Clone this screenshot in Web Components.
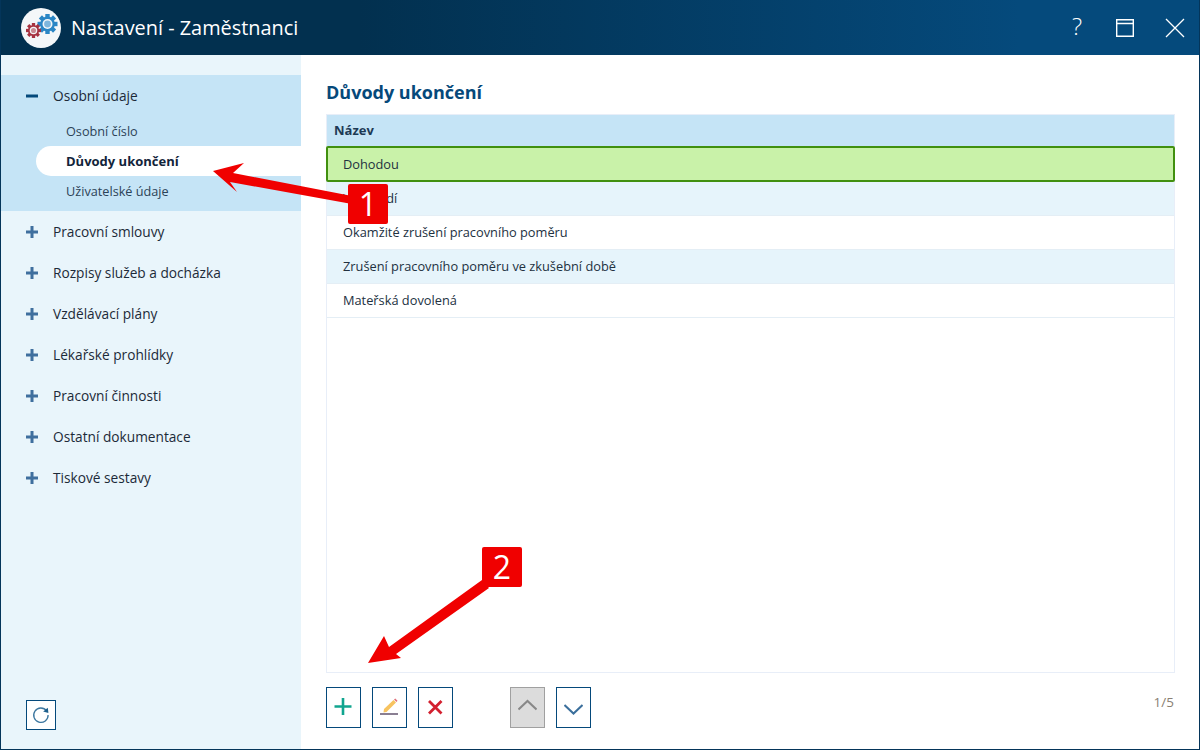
<!DOCTYPE html>
<html lang="cs">
<head>
<meta charset="utf-8">
<title>Nastavení - Zaměstnanci</title>
<style>
    html, body { margin: 0; padding: 0; background: #fff; }
    body { font-family: "Open Sans", "Liberation Sans", sans-serif; }
</style>
</head>
<body>
<app-window>
    <title-bar slot="title" text="Nastavení - Zaměstnanci"></title-bar>
    <side-nav slot="side">
        <nav-group label="Osobní údaje" open>
            <nav-sub>Osobní číslo</nav-sub>
            <nav-sub active>Důvody ukončení</nav-sub>
            <nav-sub>Uživatelské údaje</nav-sub>
        </nav-group>
        <nav-group label="Pracovní smlouvy"></nav-group>
        <nav-group label="Rozpisy služeb a docházka"></nav-group>
        <nav-group label="Vzdělávací plány"></nav-group>
        <nav-group label="Lékařské prohlídky"></nav-group>
        <nav-group label="Pracovní činnosti"></nav-group>
        <nav-group label="Ostatní dokumentace"></nav-group>
        <nav-group label="Tiskové sestavy"></nav-group>
    </side-nav>
    <list-panel slot="main" heading="Důvody ukončení">
        <table-row head>Název</table-row>
        <table-row selected>Dohodou</table-row>
        <table-row alt>Výpovědí</table-row>
        <table-row>Okamžité zrušení pracovního poměru</table-row>
        <table-row alt>Zrušení pracovního poměru ve zkušební době</table-row>
        <table-row>Mateřská dovolená</table-row>
    </list-panel>
    <call-outs slot="over"></call-outs>
</app-window>

<script>
class AppWindow extends HTMLElement {
    constructor() {
        super();
        this.attachShadow({ mode: 'open' });
        this.shadowRoot.innerHTML = `
            <style>
                :host {
                    display: grid;
                    position: relative;
                    width: 1200px;
                    height: 750px;
                    box-sizing: border-box;
                    border: 1px solid #04355a;
                    border-top: 0;
                    grid-template-columns: 300px 1fr;
                    grid-template-rows: 55px 1fr;
                    background: #fff;
                    overflow: hidden;
                }
                .title { grid-column: 1 / 3; margin: 0 -1px; display: block; }
            </style>
            <div class="title"><slot name="title"></slot></div>
            <slot name="side"></slot>
            <slot name="main"></slot>
            <slot name="over"></slot>
        `;
    }
}

class TitleBar extends HTMLElement {
    constructor() {
        super();
        this.attachShadow({ mode: 'open' });
    }
    connectedCallback() {
        const gear = (cx, cy, r, color, inner) => {
            let teeth = '';
            for (let i = 0; i < 8; i++) {
                teeth += `<rect x="${cx - r * 0.22}" y="${cy - r}" width="${r * 0.44}" height="${r * 0.4}" fill="${color}" transform="rotate(${i * 45} ${cx} ${cy})"/>`;
            }
            return `${teeth}<circle cx="${cx}" cy="${cy}" r="${r * 0.74}" fill="${color}"/>
                <circle cx="${cx}" cy="${cy}" r="${r * 0.5}" fill="#f4f7f9"/>
                <circle cx="${cx}" cy="${cy}" r="${r * 0.34}" fill="${inner}"/>`;
        };
        this.shadowRoot.innerHTML = `
            <style>
                :host {
                    display: flex;
                    align-items: center;
                    height: 55px;
                    background: linear-gradient(90deg, #02304f 0%, #02304f 30%, #054a7c 85%, #054a7c 100%);
                    color: #fff;
                }
                .logo { margin-left: 21px; width: 40px; height: 40px; flex: none; }
                .text { margin-left: 10px; font-size: 19.9px; padding-bottom: 1px; }
                .btns { margin-left: auto; display: flex; align-items: center; }
                .q { width: 20px; margin-right: 29px; text-align: center; font-size: 24px; line-height: 1; font-weight: 300; padding-bottom: 3px; }
                svg.b { display: block; }
            </style>
            <svg class="logo" viewBox="0 0 40 40">
                <circle cx="20" cy="20" r="20" fill="#f4f7f9"/>
                ${gear(26.5, 16, 10, '#2a86c5', '#7db6dd')}
                ${gear(12.5, 22.5, 7.5, '#a63240', '#c98a92')}
            </svg>
            <span class="text">${this.getAttribute('text')}</span>
            <div class="btns">
                <span class="q">?</span>
                <svg class="b" width="18" height="18" viewBox="0 0 18 18" fill="none" stroke="#fff" style="margin-right:31px">
                    <path d="M.7 .7h16.600v16.600H.7zM.7 4.500h16.600" stroke-width="1.4"/>
                </svg>
                <svg class="b" width="20" height="20" viewBox="0 0 20 20" fill="none" stroke="#fff" style="margin-right:15px">
                    <path d="M1 1l18 18M19 1L1 19" stroke-width="1.3"/>
                </svg>
            </div>
        `;
    }
}

class SideNav extends HTMLElement {
    constructor() {
        super();
        this.attachShadow({ mode: 'open' });
        this.shadowRoot.innerHTML = `
            <style>
                :host {
                    display: flex;
                    flex-direction: column;
                    background: #e9f5fb;
                    padding-top: 20px;
                    position: relative;
                    min-height: 0;
                }
                .reload {
                    margin: auto 0 19px 25px;
                    width: 30px;
                    height: 30px;
                    box-sizing: border-box;
                    border: 1px solid #04497b;
                    background: #fff;
                    display: flex;
                    align-items: center;
                    justify-content: center;
                }
            </style>
            <slot></slot>
            <div class="reload">
                <svg width="18" height="18" viewBox="0 0 18 18" fill="none">
                    <path d="M14.6 4.8A7.2 7.2 0 1 0 16.1 9" stroke="#3b769f" stroke-width="1.3"/>
                    <path d="M11.2 5.6l5.2 1.3-.6-5.2z" fill="#1d5f8c"/>
                </svg>
            </div>
        `;
    }
}

class NavGroup extends HTMLElement {
    constructor() {
        super();
        this.attachShadow({ mode: 'open' });
    }
    connectedCallback() {
        const open = this.hasAttribute('open');
        this.shadowRoot.innerHTML = `
            <style>
                :host {
                    display: block;
                    font-size: 13.7px;
                    color: #1c2a38;
                    ${open ? 'background: #c5e4f6; padding-bottom: 5px;' : ''}
                }
                .row { display: flex; align-items: center; height: 41px; padding-left: 25px; }
                svg { flex: none; margin-right: 15px; }
            </style>
            <div class="row">
                <svg width="12" height="12" viewBox="0 0 12 12">
                    ${open
                        ? '<rect x="0" y="4.500" width="12" height="3" fill="#04497b"/>'
                        : '<path d="M4.500 0h3v4.500H12v3H7.500V12h-3V7.500H0v-3h4.500z" fill="#3f6f9e"/>'}
                </svg>
                <span>${this.getAttribute('label')}</span>
            </div>
            <slot></slot>
        `;
    }
}

class NavSub extends HTMLElement {
    constructor() {
        super();
        this.attachShadow({ mode: 'open' });
    }
    connectedCallback() {
        const active = this.hasAttribute('active');
        this.shadowRoot.innerHTML = `
            <style>
                :host {
                    display: flex;
                    align-items: center;
                    height: 30px;
                    margin-left: 35px;
                    padding-left: 30px;
                    font-size: ${active ? 13 : 12.7}px;
                    color: ${active ? '#12243a' : '#2c4257'};
                    font-weight: ${active ? 700 : 400};
                    ${active ? 'background: #fff; border-radius: 15px 0 0 15px;' : ''}
                }
            </style>
            <slot></slot>
        `;
    }
}

class ListPanel extends HTMLElement {
    constructor() {
        super();
        this.attachShadow({ mode: 'open' });
    }
    connectedCallback() {
        const icons = {
            add: '<path d="M9 0v17M.5 8.500h17" stroke="#10a58f" stroke-width="2.6"/>',
            edit: '<path d="M4 11L13.500 2l2.500 2.500L6.500 14l-3 .5z" fill="#f7c35f"/><path d="M14 1.500l1.300-1 2.200 2.200-1 1.300z" fill="#e0707a"/><path d="M0 16h18" stroke="#8a7f92" stroke-width="2"/>',
            del: '<path d="M3 3l12.500 12.500M15.500 3L3 15.500" stroke="#d3202f" stroke-width="2.8"/>',
            up: '<path d="M.5 11.500L9.500 3l9 8.500" fill="none" stroke="#888" stroke-width="2"/>',
            down: '<path d="M.5 7l9 8.500 9-8.500" fill="none" stroke="#3b6f9c" stroke-width="2"/>'
        };
        const btn = (name, cls) => `<button class="${cls || ''}"><svg width="19" height="19" viewBox="0 0 19 19">${icons[name]}</svg></button>`;
        this.shadowRoot.innerHTML = `
            <style>
                :host {
                    display: flex;
                    flex-direction: column;
                    padding: 25px 24px 21px 25px;
                    min-height: 0;
                    position: relative;
                }
                h2 {
                    margin: 0 0 9px;
                    font-size: 18px;
                    line-height: 25px;
                    font-weight: 700;
                    color: #06497a;
                }
                .table {
                    flex: 1;
                    border: 1px solid #e8eef8;
                    min-height: 0;
                }
                .tools { display: flex; align-items: center; margin-top: 14px; }
                button {
                    width: 35px;
                    height: 41px;
                    box-sizing: border-box;
                    margin: 0 11px 0 0;
                    padding: 0;
                    border: 1px solid #04497b;
                    background: #fff;
                    display: flex;
                    align-items: center;
                    justify-content: center;
                }
                button.off { background: #dcdcdc; border-color: #a0a0a0; }
                button.gap { margin-left: 46px; }
                .count { margin-left: auto; font-size: 13.5px; color: #8a7f72; margin-top: -11px; margin-right: 1px; }
            </style>
            <h2>${this.getAttribute('heading')}</h2>
            <div class="table"><slot></slot></div>
            <div class="tools">
                ${btn('add')}${btn('edit')}${btn('del')}
                ${btn('up', 'off gap')}${btn('down')}
                <span class="count">1/5</span>
            </div>
        `;
    }
}

class TableRow extends HTMLElement {
    constructor() {
        super();
        this.attachShadow({ mode: 'open' });
    }
    connectedCallback() {
        const head = this.hasAttribute('head');
        const selected = this.hasAttribute('selected');
        const alt = this.hasAttribute('alt');
        let look = 'background: #fff; border-bottom: 1px solid #e4eef5; padding-bottom: 2px;';
        if (alt) look = 'background: #e6f4fb; border-bottom: 1px solid #e4eef5; padding-bottom: 2px;';
        if (selected) look = 'background: #c9f2a9; border: 2px solid #41900f; border-radius: 2px; margin-right: -1px; margin-left: -1px; padding-left: 15px;';
        if (head) look = 'background: #c5e4f6; padding-left: 7px; padding-bottom: 1px; font-size: 13px; font-weight: 700; color: #1d3a55;';
        this.shadowRoot.innerHTML = `
            <style>
                :host {
                    display: flex;
                    align-items: center;
                    box-sizing: border-box;
                    height: ${head ? 31 : selected ? 36 : 34}px;
                    padding-left: 16px;
                    font-size: 12.8px;
                    color: #22313f;
                    ${look}
                }
            </style>
            <slot></slot>
        `;
    }
}

class CallOuts extends HTMLElement {
    constructor() {
        super();
        this.attachShadow({ mode: 'open' });
        this.shadowRoot.innerHTML = `
            <style>
                :host { position: absolute; left: -1px; top: 0; width: 1200px; height: 750px; pointer-events: none; }
                svg { position: absolute; left: 0; top: 0; }
                .badge {
                    position: absolute;
                    width: 40px;
                    height: 40px;
                    border-radius: 2px;
                    background: #f00000;
                    color: #fff;
                    font: 32px/40px "Open Sans", "Liberation Sans", sans-serif;
                    text-align: center;
                }
            </style>
            <svg width="1200" height="750">
                <polygon fill="#f00000" points="213,171 244,163 233,173 352,196 352,204 230,182 237,192"/>
                <polygon fill="#f00000" points="368,663 384,636 389,647 482,580 489,588 396,654 401,658"/>
            </svg>
            <div class="badge" style="left:348px;top:184px">1</div>
            <div class="badge" style="left:482px;top:547px">2</div>
        `;
    }
}

customElements.define('app-window', AppWindow);
customElements.define('title-bar', TitleBar);
customElements.define('side-nav', SideNav);
customElements.define('nav-group', NavGroup);
customElements.define('nav-sub', NavSub);
customElements.define('list-panel', ListPanel);
customElements.define('table-row', TableRow);
customElements.define('call-outs', CallOuts);
</script>
</body>
</html>
